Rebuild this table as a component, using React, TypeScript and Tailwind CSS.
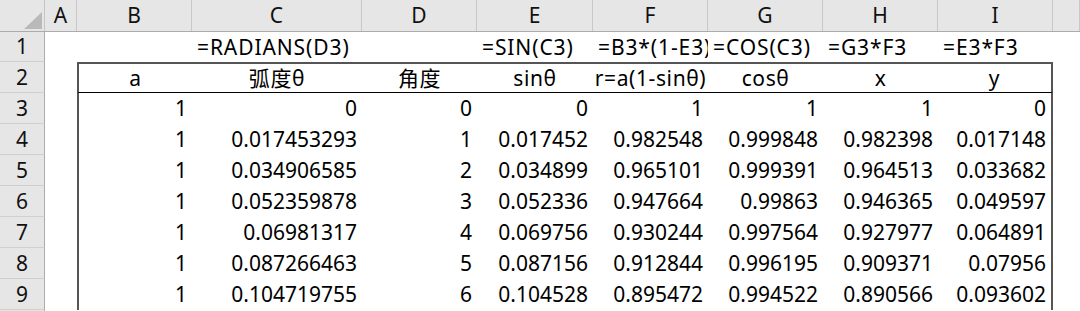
import React from "react";

type Col = { key: string; w: string };

const COLS: Col[] = [
  { key: "A", w: "w-[32px]" },
  { key: "B", w: "w-[115px]" },
  { key: "C", w: "w-[170px]" },
  { key: "D", w: "w-[115px]" },
  { key: "E", w: "w-[116px]" },
  { key: "F", w: "w-[115px]" },
  { key: "G", w: "w-[115px]" },
  { key: "H", w: "w-[115px]" },
  { key: "I", w: "w-[115px]" },
  { key: "", w: "w-[27px]" },
];

const FORMULAS: Record<string, string> = {
  C: "=RADIANS(D3)",
  E: "=SIN(C3)",
  F: "=B3*(1-E3)",
  G: "=COS(C3)",
  H: "=G3*F3",
  I: "=E3*F3",
};

const HEADERS = ["a", "弧度θ", "角度", "sinθ", "r=a(1-sinθ)", "cosθ", "x", "y"];

const DATA: string[][] = [
  ["1", "0", "0", "0", "1", "1", "1", "0"],
  ["1", "0.017453293", "1", "0.017452", "0.982548", "0.999848", "0.982398", "0.017148"],
  ["1", "0.034906585", "2", "0.034899", "0.965101", "0.999391", "0.964513", "0.033682"],
  ["1", "0.052359878", "3", "0.052336", "0.947664", "0.99863", "0.946365", "0.049597"],
  ["1", "0.06981317", "4", "0.069756", "0.930244", "0.997564", "0.927977", "0.064891"],
  ["1", "0.087266463", "5", "0.087156", "0.912844", "0.996195", "0.909371", "0.07956"],
  ["1", "0.104719755", "6", "0.104528", "0.895472", "0.994522", "0.890566", "0.093602"],
];

const tableCols = ["B", "C", "D", "E", "F", "G", "H", "I"];

// outline of the bordered table: left edge on B, right edge on I
const edge = (key: string) =>
  key === "B" ? "border-l-2 border-l-[#555]" : key === "I" ? "border-r-2 border-r-[#555]" : "";

const RowHead = ({ n, h }: { n: string; h: string }) => (
  <div
    className={`${h} w-[45px] shrink-0 flex items-center justify-center bg-[#e6e6e6] border-r border-r-[#ababab] border-b border-b-[#cfcfcf] text-[21px] text-[#111]`}
  >
    {n}
  </div>
);

export default function App() {
  return (
    <div
      className="w-[1080px] h-[311px] overflow-hidden bg-white text-black leading-none"
      style={{ fontFamily: '"Noto Sans", "Noto Sans CJK SC", sans-serif' }}
    >
      {/* column letters */}
      <div className="flex h-[32px] bg-[#e6e6e6] border-b border-b-[#ababab]">
        <div className="w-[45px] shrink-0 border-r border-r-[#c4c4c4] relative">
          <svg width="45" height="31" className="absolute left-0 top-0">
            <polygon points="42,12 42,29 24,29" fill="#b9b9b9" />
          </svg>
        </div>
        {COLS.map((c) => (
          <div
            key={c.key || "J"}
            className={`${c.w} shrink-0 flex items-center justify-center border-r border-r-[#c8c8c8] text-[21px] text-[#111]`}
          >
            {c.key}
          </div>
        ))}
      </div>

      {/* row 1: formulas */}
      <div className="flex h-[30px]">
        <RowHead n="1" h="h-[30px]" />
        {COLS.map((c) => (
          <div
            key={c.key || "J"}
            className={`${c.w} shrink-0 flex items-center pl-[5px] whitespace-nowrap text-[21px] tracking-[0.9px] ${c.key === "F" ? "overflow-hidden" : ""}`}
          >
            {FORMULAS[c.key] ?? ""}
          </div>
        ))}
      </div>

      {/* row 2: headings */}
      <div className="flex h-[31px]">
        <RowHead n="2" h="h-[31px]" />
        {COLS.map((c) => {
          const i = tableCols.indexOf(c.key);
          const inTable = i >= 0;
          return (
            <div
              key={c.key || "J"}
              className={`${c.w} shrink-0 flex items-center justify-center overflow-hidden whitespace-nowrap text-[21px] tracking-[0.6px] ${
                inTable ? `border-t-2 border-t-[#555] border-b border-b-black ${edge(c.key)}` : ""
              }`}
            >
              {inTable ? HEADERS[i] : ""}
            </div>
          );
        })}
      </div>

      {/* rows 3-9: values */}
      {DATA.map((row, r) => (
        <div key={r} className="flex h-[31px]">
          <RowHead n={String(r + 3)} h="h-[31px]" />
          {COLS.map((c) => {
            const i = tableCols.indexOf(c.key);
            return (
              <div
                key={c.key || "J"}
                className={`${c.w} shrink-0 flex items-center justify-end pr-[5px] whitespace-nowrap text-[21px] ${edge(c.key)}`}
              >
                {i >= 0 ? row[i] : ""}
              </div>
            );
          })}
        </div>
      ))}

      <div className="flex h-[31px]">
        <RowHead n="" h="h-[31px]" />
      </div>
    </div>
  );
}
